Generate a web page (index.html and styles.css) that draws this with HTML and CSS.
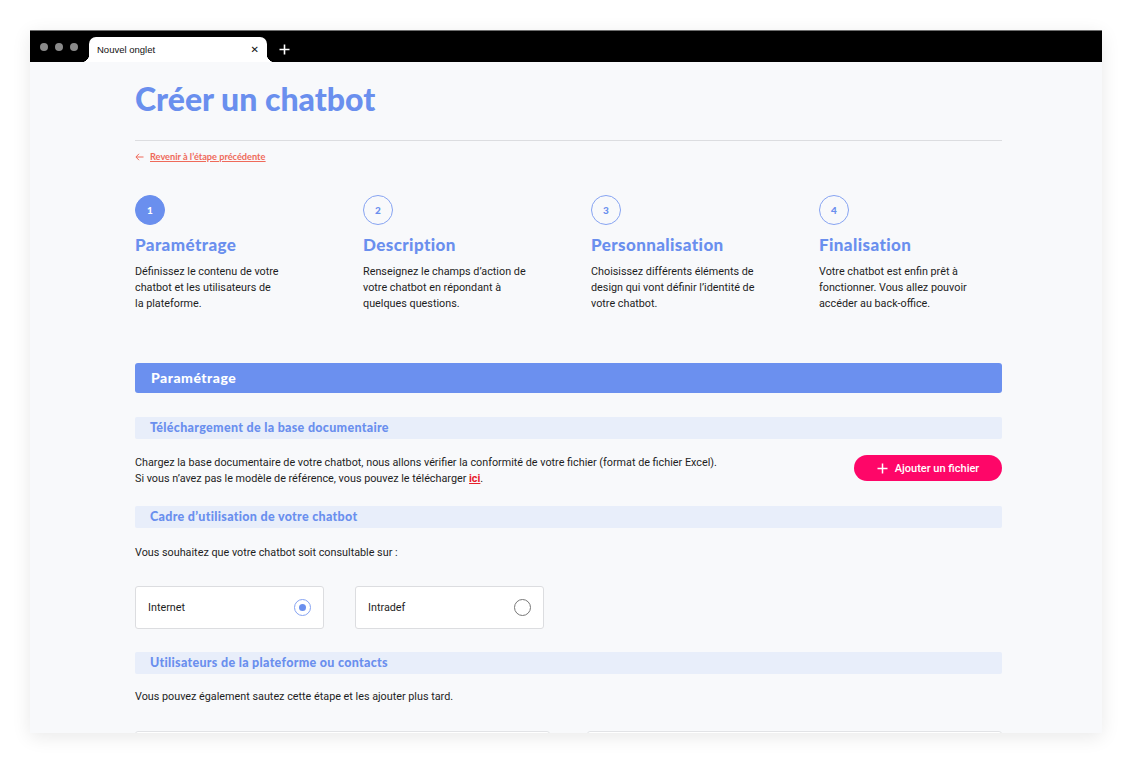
FILE: index.html
```html
<!DOCTYPE html>
<html lang="fr">
<head>
<meta charset="utf-8">
<title>Créer un chatbot</title>
<link rel="stylesheet" href="styles.css">
</head>
<body>
<div class="window">
  <div class="chrome">
    <div class="dots"><span></span><span></span><span></span></div>
    <div class="tab">
      <span class="tab-title">Nouvel onglet</span>
      <span class="tab-close">✕</span>
    </div>
    <span class="tab-new">
      <svg width="11" height="11" viewBox="0 0 11 11"><path d="M5.5 0.5v10M0.5 5.5h10" stroke="#fff" stroke-width="1.6"/></svg>
    </span>
  </div>
  <div class="page">
    <div class="content">
      <h1 class="title">Créer un chatbot</h1>
      <hr class="divider">
      <a class="back" href="#">
        <svg width="9" height="8" viewBox="0 0 9 8"><path d="M8.5 4H1M4 0.8L0.9 4L4 7.2" fill="none" stroke="#ef6a5a" stroke-width="1"/></svg>
        <span>Revenir à l’étape précédente</span>
      </a>

      <div class="steps">
        <div class="step">
          <div class="step-num active">1</div>
          <h3 class="step-title">Paramétrage</h3>
          <p class="step-desc">Définissez le contenu de votre<br>chatbot et les utilisateurs de<br>la plateforme.</p>
        </div>
        <div class="step">
          <div class="step-num">2</div>
          <h3 class="step-title">Description</h3>
          <p class="step-desc">Renseignez le champs d’action de<br>votre chatbot en répondant à<br>quelques questions.</p>
        </div>
        <div class="step">
          <div class="step-num">3</div>
          <h3 class="step-title">Personnalisation</h3>
          <p class="step-desc">Choisissez différents éléments de<br>design qui vont définir l’identité de<br>votre chatbot.</p>
        </div>
        <div class="step">
          <div class="step-num">4</div>
          <h3 class="step-title">Finalisation</h3>
          <p class="step-desc">Votre chatbot est enfin prêt à<br>fonctionner. Vous allez pouvoir<br>accéder au back-office.</p>
        </div>
      </div>

      <div class="section-bar">Paramétrage</div>

      <div class="sub-bar first">Téléchargement de la base documentaire</div>
      <div class="upload-row">
        <p class="text">Chargez la base documentaire de votre chatbot, nous allons vérifier la conformité de votre fichier (format de fichier Excel).<br>Si vous n’avez pas le modèle de référence, vous pouvez le télécharger <a class="ici" href="#">ici</a>.</p>
        <button class="btn-add">
          <svg width="11" height="11" viewBox="0 0 11 11"><path d="M5.5 0.5v10M0.5 5.5h10" stroke="#fff" stroke-width="1.5"/></svg>
          <span>Ajouter un fichier</span>
        </button>
      </div>

      <div class="sub-bar">Cadre d’utilisation de votre chatbot</div>
      <p class="text question">Vous souhaitez que votre chatbot soit consultable sur :</p>
      <div class="choices">
        <label class="choice">
          <span>Internet</span>
          <span class="radio checked"></span>
        </label>
        <label class="choice">
          <span>Intradef</span>
          <span class="radio"></span>
        </label>
      </div>

      <div class="sub-bar">Utilisateurs de la plateforme ou contacts</div>
      <p class="text note">Vous pouvez également sautez cette étape et les ajouter plus tard.</p>
      <div class="cards">
        <div class="card"></div>
        <div class="card"></div>
      </div>
    </div>
  </div>
</div>
</body>
</html>
```

FILE: styles.css
```css
* { box-sizing: border-box; }
html, body { margin: 0; padding: 0; background: #ffffff; }
body { width: 1132px; height: 764px; overflow: hidden; font-family: Roboto, "Liberation Sans", sans-serif; }

.window {
  margin: 30px 0 0 30px;
  width: 1072px;
  height: 703px;
  overflow: hidden;
  background: #f8f9fb;
  box-shadow: 0 4px 18px rgba(0, 0, 0, 0.09);
}

.chrome {
  height: 32px;
  background: #000;
  border-top: 1px solid #6e6e6e;
  display: flex;
  align-items: flex-end;
}
.dots { display: flex; gap: 7px; padding: 0 0 11px 10px; }
.dots span { width: 8px; height: 8px; border-radius: 50%; background: #8a8a8a; }
.tab {
  margin-left: 11px;
  width: 178px;
  height: 25px;
  background: #fff;
  border-radius: 7px 7px 0 0;
  display: flex;
  align-items: center;
  justify-content: space-between;
  padding: 0 8px;
  position: relative;
}
.tab::before, .tab::after {
  content: "";
  position: absolute;
  bottom: 0;
  width: 8px;
  height: 8px;
}
.tab::before { left: -8px; background: radial-gradient(circle at 0 0, transparent 8px, #fff 8.5px); }
.tab::after { right: -8px; background: radial-gradient(circle at 100% 0, transparent 8px, #fff 8.5px); }
.tab-title { font-family: "Liberation Sans", Arial, sans-serif; font-size: 9.5px; color: #111; }
.tab-close { font-size: 10px; color: #111; font-family: "DejaVu Sans", sans-serif; font-weight: bold; }
.tab-new { margin-left: 12px; padding-bottom: 7px; display: flex; }

.page { height: 670px; }
.content { width: 867px; margin-left: 105px; padding-top: 19px; }

.title {
  margin: 0;
  font-family: Lato, sans-serif;
  font-weight: 900;
  font-size: 32px;
  line-height: 36px;
  color: #6a8fee;
}
.divider { margin: 23px 0 0; border: 0; border-top: 1px solid #dcdde0; height: 0; }

.back {
  margin-top: 9px;
  display: inline-flex;
  align-items: center;
  gap: 6px;
  color: #ef6a5a;
  font-family: Lato, sans-serif;
  font-weight: 700;
  font-size: 9.2px;
  line-height: 14px;
}
.back span { text-decoration: underline; }

.steps {
  margin-top: 30px;
  display: grid;
  grid-template-columns: repeat(4, 200px);
  column-gap: 28px;
}
.step-num {
  width: 30px; height: 30px;
  border-radius: 50%;
  border: 1px solid #87a4f2;
  color: #6a8fee;
  display: flex; align-items: center; justify-content: center;
  font-family: Lato, sans-serif;
  font-weight: 900;
  font-size: 10px;
}
.step-num.active { background: #6a8fee; border-color: #6a8fee; color: #fff; }
.step-title {
  margin: 10px 0 0;
  font-family: Lato, sans-serif;
  font-weight: 900;
  font-size: 17px;
  letter-spacing: 0.4px;
  line-height: 20px;
  color: #6a8fee;
}
.step-desc {
  margin: 9px 0 0;
  font-size: 10.8px;
  line-height: 16px;
  color: #1e1e1e;
}

.section-bar {
  margin-top: 51px;
  height: 30px;
  background: #6b90ef;
  border-radius: 3px;
  color: #fff;
  font-family: Lato, sans-serif;
  font-weight: 900;
  font-size: 14px;
  letter-spacing: 0.5px;
  line-height: 30px;
  padding-left: 16px;
}
.sub-bar {
  margin-top: 19px;
  height: 22px;
  background: #e8eefa;
  border-radius: 2px;
  color: #6a8fee;
  font-family: Lato, sans-serif;
  font-weight: 900;
  font-size: 12.5px;
  letter-spacing: 0.3px;
  line-height: 22px;
  padding-left: 15px;
}
.sub-bar.first { margin-top: 24px; }

.text {
  margin: 0;
  font-size: 10.8px;
  line-height: 16px;
  color: #1e1e1e;
}
.upload-row {
  margin-top: 16px;
  display: flex;
  justify-content: space-between;
  align-items: flex-start;
}
.ici { color: #e8202a; font-weight: 700; text-decoration: underline; }
.btn-add {
  width: 148px;
  height: 26px;
  border: 0;
  border-radius: 13px;
  background: #fe0668;
  color: #fff;
  display: flex;
  align-items: center;
  justify-content: center;
  gap: 7px;
  font-family: Roboto, sans-serif;
  font-weight: 500;
  font-size: 11px;
  padding: 0;
}
.question { margin-top: 17px; }
.choices { margin-top: 25px; display: flex; gap: 31px; }
.choice {
  width: 189px;
  height: 43px;
  background: #fff;
  border: 1px solid #dcdde0;
  border-radius: 3px;
  display: flex;
  align-items: center;
  justify-content: space-between;
  padding: 0 12px 0 12px;
  font-size: 10.8px;
  color: #1e1e1e;
}
.radio {
  width: 17px; height: 17px;
  border-radius: 50%;
  border: 1px solid #777;
  background: #fff;
  display: flex; align-items: center; justify-content: center;
}
.radio.checked { border-color: #86a3f2; }
.radio.checked::after { content: ""; width: 7px; height: 7px; border-radius: 50%; background: #6a8fee; }

.choices + .sub-bar { margin-top: 23px; }
.note { margin-top: 15px; }
.cards { margin-top: 26px; display: flex; gap: 37px; }
.card { flex: 1; height: 100px; background: #fff; border: 1px solid #e2e3e6; border-radius: 3px; }
```
